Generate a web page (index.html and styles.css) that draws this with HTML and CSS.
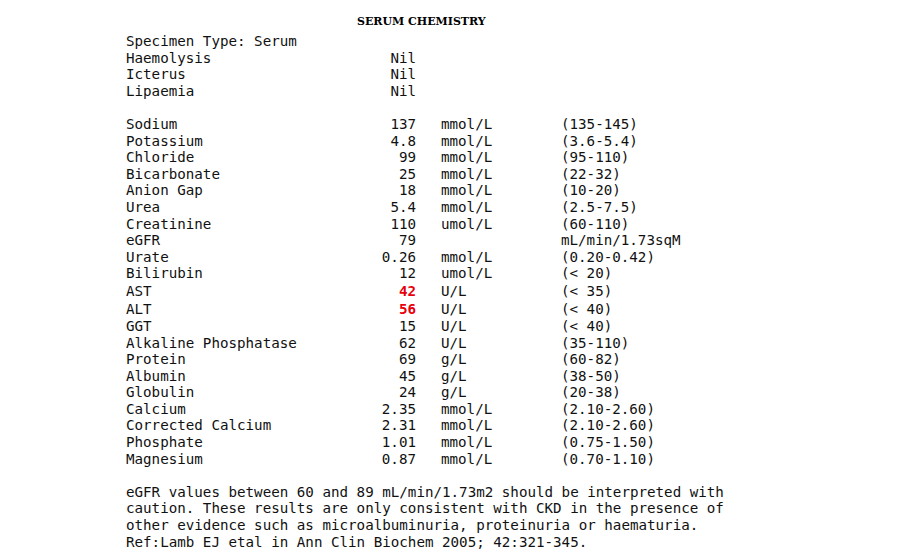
FILE: index.html
```html
<!DOCTYPE html>
<html>
<head>
<meta charset="utf-8">
<link rel="stylesheet" href="styles.css">
</head>
<body>
<div class="report">
  <div class="title">SERUM CHEMISTRY</div>
  <div class="spec">Specimen Type: Serum</div>
  <div class="grid">
    <div class="row"><span class="name">Haemolysis</span><span class="val">Nil</span><span class="unit"></span><span class="range"></span></div>
    <div class="row"><span class="name">Icterus</span><span class="val">Nil</span><span class="unit"></span><span class="range"></span></div>
    <div class="row"><span class="name">Lipaemia</span><span class="val">Nil</span><span class="unit"></span><span class="range"></span></div>
    <div class="row blank"></div>
    <div class="row"><span class="name">Sodium</span><span class="val">137</span><span class="unit">mmol/L</span><span class="range">(135-145)</span></div>
    <div class="row"><span class="name">Potassium</span><span class="val">4.8</span><span class="unit">mmol/L</span><span class="range">(3.6-5.4)</span></div>
    <div class="row"><span class="name">Chloride</span><span class="val">99</span><span class="unit">mmol/L</span><span class="range">(95-110)</span></div>
    <div class="row"><span class="name">Bicarbonate</span><span class="val">25</span><span class="unit">mmol/L</span><span class="range">(22-32)</span></div>
    <div class="row"><span class="name">Anion Gap</span><span class="val">18</span><span class="unit">mmol/L</span><span class="range">(10-20)</span></div>
    <div class="row"><span class="name">Urea</span><span class="val">5.4</span><span class="unit">mmol/L</span><span class="range">(2.5-7.5)</span></div>
    <div class="row"><span class="name">Creatinine</span><span class="val">110</span><span class="unit">umol/L</span><span class="range">(60-110)</span></div>
    <div class="row"><span class="name">eGFR</span><span class="val">79</span><span class="unit"></span><span class="range">mL/min/1.73sqM</span></div>
    <div class="row"><span class="name">Urate</span><span class="val">0.26</span><span class="unit">mmol/L</span><span class="range">(0.20-0.42)</span></div>
    <div class="row"><span class="name">Bilirubin</span><span class="val">12</span><span class="unit">umol/L</span><span class="range">(&lt; 20)</span></div>
    <div class="row flag"><span class="name">AST</span><span class="val high">42</span><span class="unit">U/L</span><span class="range">(&lt; 35)</span></div>
    <div class="row flag"><span class="name">ALT</span><span class="val high">56</span><span class="unit">U/L</span><span class="range">(&lt; 40)</span></div>
    <div class="row"><span class="name">GGT</span><span class="val">15</span><span class="unit">U/L</span><span class="range">(&lt; 40)</span></div>
    <div class="row"><span class="name">Alkaline Phosphatase</span><span class="val">62</span><span class="unit">U/L</span><span class="range">(35-110)</span></div>
    <div class="row"><span class="name">Protein</span><span class="val">69</span><span class="unit">g/L</span><span class="range">(60-82)</span></div>
    <div class="row"><span class="name">Albumin</span><span class="val">45</span><span class="unit">g/L</span><span class="range">(38-50)</span></div>
    <div class="row"><span class="name">Globulin</span><span class="val">24</span><span class="unit">g/L</span><span class="range">(20-38)</span></div>
    <div class="row"><span class="name">Calcium</span><span class="val">2.35</span><span class="unit">mmol/L</span><span class="range">(2.10-2.60)</span></div>
    <div class="row"><span class="name">Corrected Calcium</span><span class="val">2.31</span><span class="unit">mmol/L</span><span class="range">(2.10-2.60)</span></div>
    <div class="row"><span class="name">Phosphate</span><span class="val">1.01</span><span class="unit">mmol/L</span><span class="range">(0.75-1.50)</span></div>
    <div class="row"><span class="name">Magnesium</span><span class="val">0.87</span><span class="unit">mmol/L</span><span class="range">(0.70-1.10)</span></div>
  </div>
  <p class="note">eGFR values between 60 and 89 mL/min/1.73m2 should be interpreted with
caution. These results are only consistent with CKD in the presence of
other evidence such as microalbuminuria, proteinuria or haematuria.
Ref:Lamb EJ etal in Ann Clin Biochem 2005; 42:321-345.</p>
</div>
</body>
</html>
```

FILE: styles.css
```css
html, body {
  margin: 0;
  padding: 0;
  background: #ffffff;
}

.report {
  padding: 13px 0 0 126px;
  font-family: "DejaVu Sans Mono", monospace;
  font-size: 14.2px;
  line-height: 16.6px;
  color: #111;
}

.title {
  font-family: "DejaVu Serif", "Liberation Serif", serif;
  font-weight: bold;
  font-size: 11px;
  letter-spacing: 0;
  line-height: 18px;
  padding-left: 231px;
  margin-bottom: 2px;
  color: #000;
}

.spec {
  white-space: pre;
}

.grid {
  display: flex;
  flex-direction: column;
}

.row {
  display: grid;
  grid-template-columns: 200px 90px 145px auto;
  white-space: pre;
  min-height: 16.6px;
}

.row.flag {
  min-height: 18px;
  line-height: 18px;
}

.val {
  text-align: right;
}

.unit {
  padding-left: 25px;
}

.high {
  color: #e8000b;
  font-weight: bold;
}

.note {
  margin: 16.6px 0 0 0;
  white-space: pre;
}
```
